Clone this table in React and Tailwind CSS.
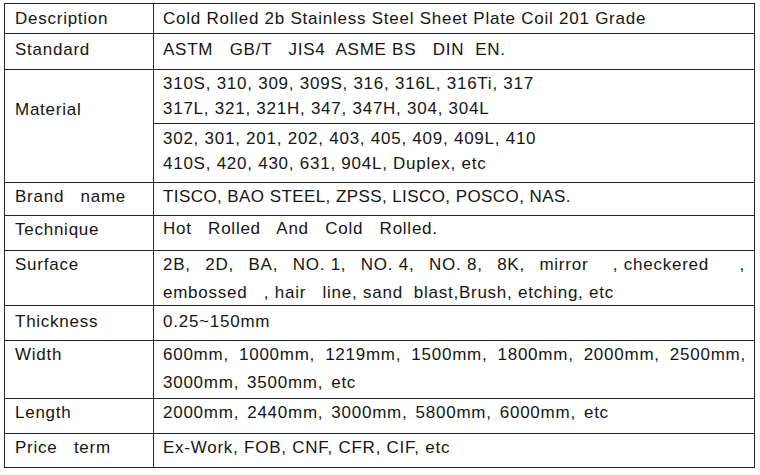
import React from "react";

const F =
  "font-['Liberation_Sans',Arial,Helvetica,sans-serif] text-[17px] text-[#151515] whitespace-pre";
const T = `${F} tracking-[0.75px]`;

function Row({ label, h, last, labelPt = "pt-0", children }) {
  return (
    <div
      className={`flex ${last ? "" : "border-b border-[#262626]"}`}
      style={{ height: h }}
    >
      <div
        className={`w-[149px] shrink-0 border-r border-[#262626] pl-[10px] ${labelPt}`}
      >
        <div className={`${T} leading-[27px]`}>{label}</div>
      </div>
      <div className="flex-1 flex flex-col">{children}</div>
    </div>
  );
}

function Cell({ children, className = "" }) {
  return <div className={`pl-[9px] ${className}`}>{children}</div>;
}

export default function App() {
  return (
    <div className="w-[760px] h-[475px] bg-white pt-[3px] pl-[4px]">
      <div className="w-[751px] border border-[#262626] bg-white">
        <Row label="Description" h={30} labelPt="pt-[1px]">
          <Cell className="pt-[1px]">
            <div className={`${T} leading-[27px]`}>
              Cold Rolled 2b Stainless Steel Sheet Plate Coil 201 Grade
            </div>
          </Cell>
        </Row>
        <Row label="Standard" h={36} labelPt="pt-[2px]">
          <Cell className="pt-[2px]">
            <div className={`${T} leading-[27px]`}>
              {"ASTM   GB/T   JIS4  ASME BS   DIN  EN."}
            </div>
          </Cell>
        </Row>
        <Row label="Material" h={113} labelPt="pt-[26px]">
          <Cell className="h-[54px] shrink-0 border-b border-[#262626] pt-[1px]">
            <div className={`${T} leading-[25px]`}>
              310S, 310, 309, 309S, 316, 316L, 316Ti, 317
            </div>
            <div className={`${T} leading-[25px]`}>
              317L, 321, 321H, 347, 347H, 304, 304L
            </div>
          </Cell>
          <Cell className="pt-[2px]">
            <div className={`${T} leading-[25px]`}>
              302, 301, 201, 202, 403, 405, 409, 409L, 410
            </div>
            <div className={`${T} leading-[25px]`}>
              410S, 420, 430, 631, 904L, Duplex, etc
            </div>
          </Cell>
        </Row>
        <Row label={"Brand   name"} h={33}>
          <Cell>
            <div className={`${F} tracking-[0.42px] leading-[27px]`}>
              TISCO, BAO STEEL, ZPSS, LISCO, POSCO, NAS.
            </div>
          </Cell>
        </Row>
        <Row label="Technique" h={35}>
          <Cell>
            <div className={`${T} leading-[25px]`}>
              {"Hot   Rolled   And   Cold   Rolled."}
            </div>
          </Cell>
        </Row>
        <Row label="Surface" h={55}>
          <Cell className="pr-[9px]">
            <div className={`${T} leading-[28px] flex justify-between`}>
              <span>2B,</span>
              <span>2D,</span>
              <span>BA,</span>
              <span>NO. 1,</span>
              <span>NO. 4,</span>
              <span>NO. 8,</span>
              <span>8K,</span>
              <span className="pr-[10px]">mirror</span>
              <span className="pr-[16px]">, checkered</span>
              <span>,</span>
            </div>
            <div className={`${T} leading-[28px]`}>
              {"embossed   , hair   line, sand  blast,Brush, etching, etc"}
            </div>
          </Cell>
        </Row>
        <Row label="Thickness" h={35} labelPt="pt-[2px]">
          <Cell className="pt-[2px]">
            <div className={`${T} leading-[27px]`}>0.25~150mm</div>
          </Cell>
        </Row>
        <Row label="Width" h={58}>
          <Cell className="pr-[8px]">
            <div className={`${T} leading-[28px] flex justify-between`}>
              <span>600mm,</span>
              <span>1000mm,</span>
              <span>1219mm,</span>
              <span>1500mm,</span>
              <span>1800mm,</span>
              <span>2000mm,</span>
              <span>2500mm,</span>
            </div>
            <div className={`${T} leading-[28px] [word-spacing:2.5px]`}>
              3000mm, 3500mm, etc
            </div>
          </Cell>
        </Row>
        <Row label="Length" h={35}>
          <Cell>
            <div className={`${T} leading-[27px] [word-spacing:2.6px]`}>
              2000mm, 2440mm, 3000mm, 5800mm, 6000mm, etc
            </div>
          </Cell>
        </Row>
        <Row label={"Price   term"} h={33} last>
          <Cell>
            <div className={`${T} leading-[27px]`}>
              Ex-Work, FOB, CNF, CFR, CIF, etc
            </div>
          </Cell>
        </Row>
      </div>
    </div>
  );
}
